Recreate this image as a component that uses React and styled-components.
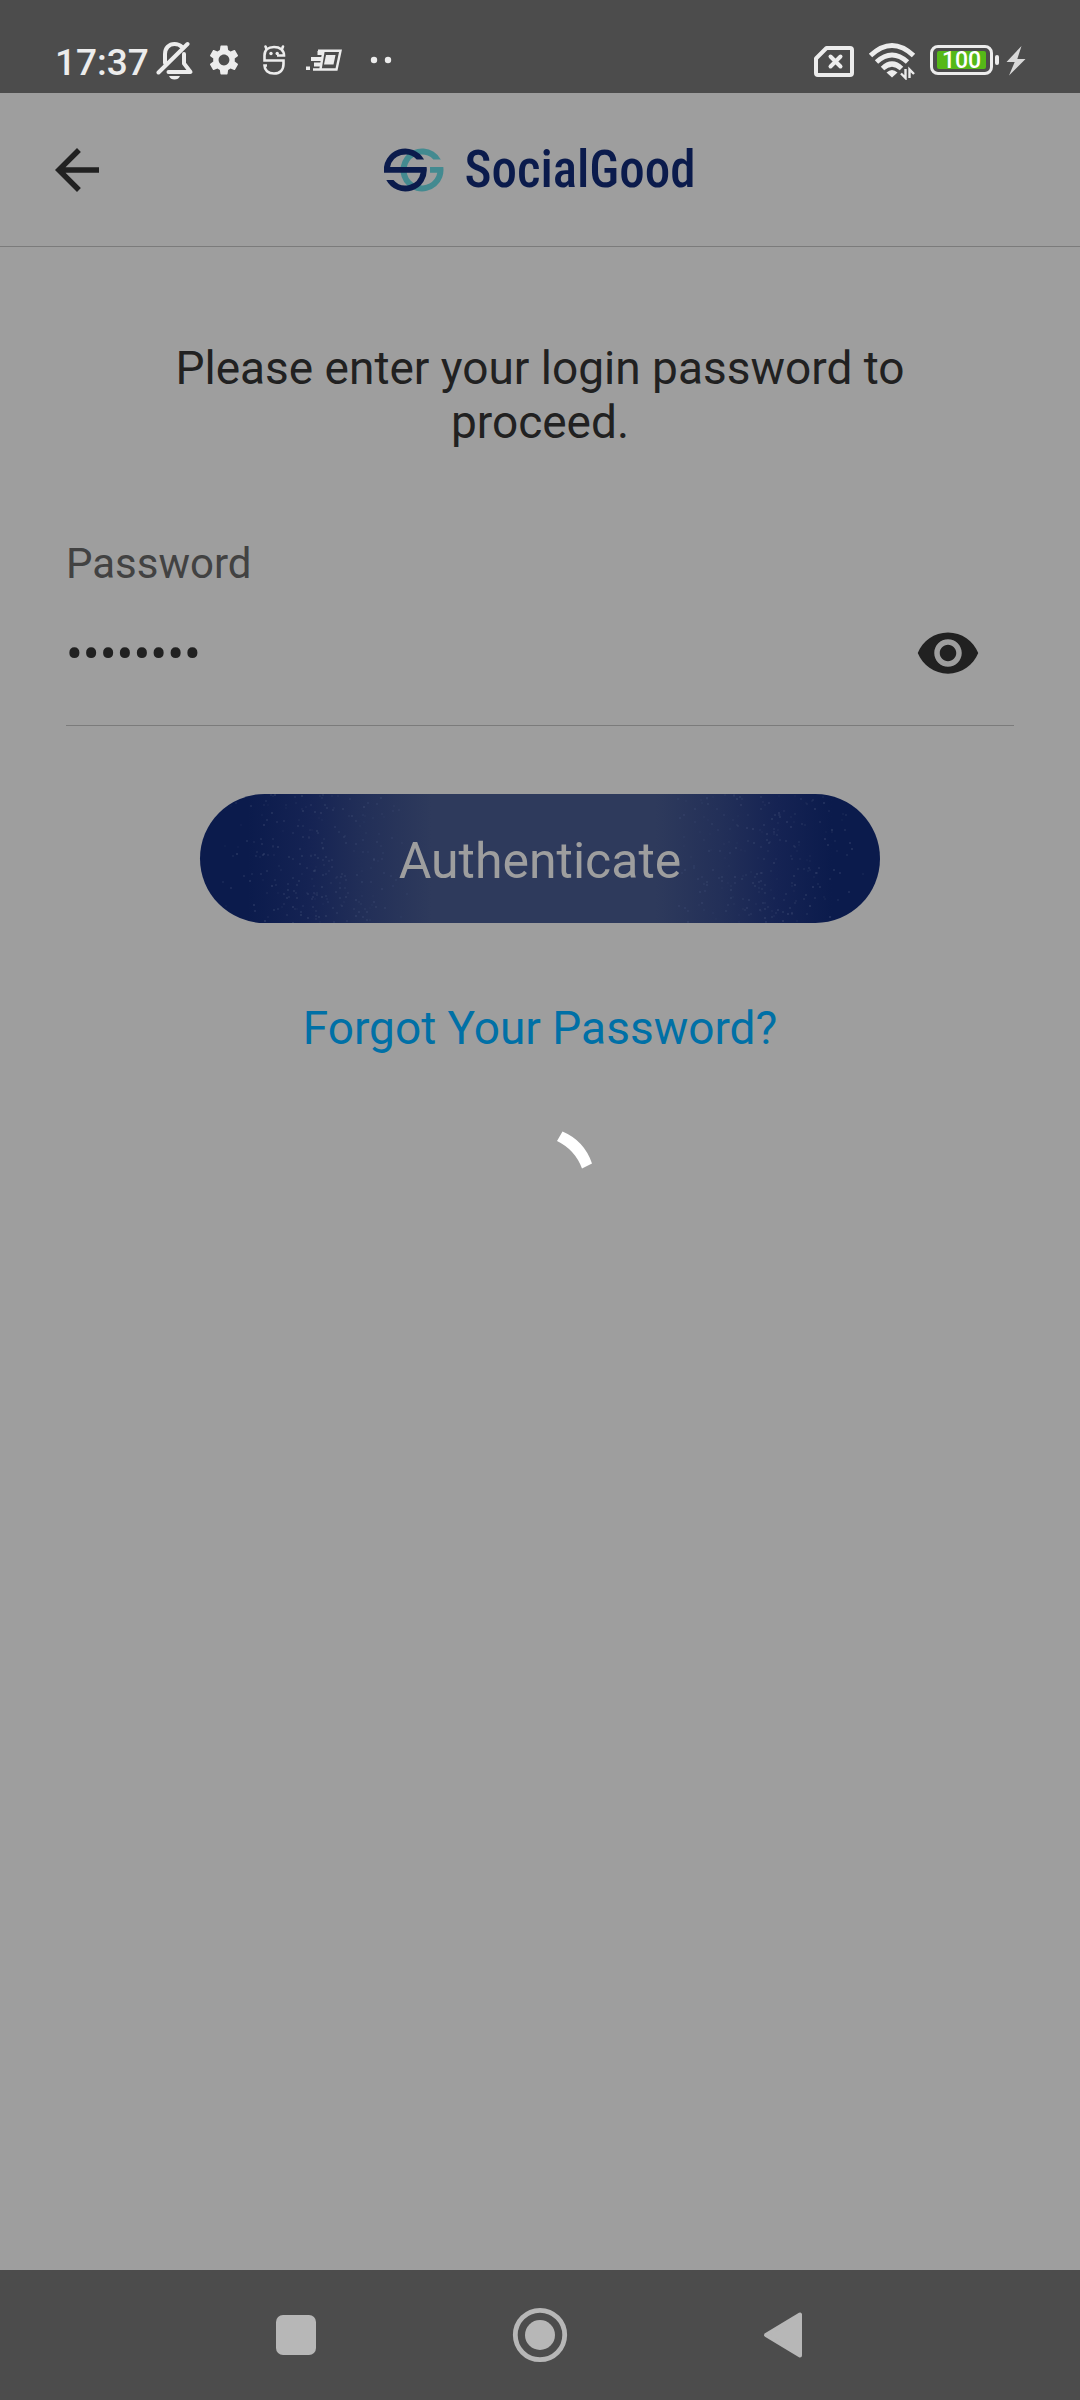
import React, { useState } from "react";
import styled, { createGlobalStyle } from "styled-components";
import { MdArrowBack, MdSettings, MdVisibility } from "react-icons/md";

const color = {
  page: "#9e9e9e",
  system: "#4c4c4c",
  systemIcon: "#ececec",
  navIcon: "#b7b7b7",
  line: "#7b7b7b",
  ink: "#212121",
  muted: "#424242",
  navy: "#0b1b4c",
  slate: "#2e3a5c",
  teal: "#438a90",
  link: "#0070a6",
  green: "#55b818",
};

const GlobalStyle = createGlobalStyle`
  * { box-sizing: border-box; }
  body {
    margin: 0;
    background: ${color.page};
    color: ${color.ink};
    font-family: Roboto, "Noto Sans", sans-serif;
  }
  svg { display: block; flex: none; }
`;

const Screen = styled.div`
  display: flex;
  flex-direction: column;
  min-height: 100vh;
`;

const StatusBar = styled.div`
  display: flex;
  align-items: center;
  height: 93px;
  padding: 32px 54px 0 55px;
  background: ${color.system};
  color: ${color.systemIcon};
`;

const Clock = styled.time`
  flex: none;
  width: 101px;
  font-size: 37px;
  font-weight: 500;
  line-height: 44px;
`;

const StatusGroup = styled.div`
  display: flex;
  align-items: center;
  gap: ${(p) => p.$gap}px;
  padding-bottom: 5px;
  margin-left: ${(p) => (p.$end ? "auto" : 0)};
`;

const PowerStatus = styled.div`
  display: flex;
  align-items: center;
  gap: 7px;
`;

const Battery = styled.div`
  display: flex;
  align-items: center;
  gap: 2px;

  &::after {
    content: "";
    width: 4px;
    height: 10px;
    border-radius: 2px;
    background: ${color.systemIcon};
  }
`;

const BatteryShell = styled.div`
  width: 63px;
  height: 30px;
  padding: 3px 4px;
  border: 3px solid ${color.systemIcon};
  border-radius: 8px;
`;

const BatteryFill = styled.div`
  display: flex;
  align-items: center;
  justify-content: center;
  height: 18px;
  padding-top: 2px;
  border-radius: 2px;
  background: ${color.green};
  color: #fff;
  font-size: 23px;
  font-weight: 500;
  line-height: 18px;
`;

const Header = styled.header`
  display: grid;
  grid-template-columns: 1fr auto 1fr;
  align-items: center;
  height: 154px;
  padding: 0 44px;
  border-bottom: 1px solid ${color.line};
`;

const IconButton = styled.button`
  display: flex;
  flex: none;
  width: 66px;
  height: 66px;
  padding: 0;
  border: 0;
  background: none;
  color: inherit;
  cursor: pointer;
`;

const Brand = styled.div`
  display: flex;
  align-items: center;
  gap: 20px;
  color: ${color.navy};
`;

const Wordmark = styled.span`
  font-family: "Roboto Condensed", "Liberation Sans Narrow", Roboto, sans-serif;
  font-size: 51px;
  font-weight: 500;
  line-height: 56px;
`;

const Main = styled.main`
  display: flex;
  flex: 1;
  flex-direction: column;
  align-items: center;
  padding: 94px 66px 0;
`;

const Prompt = styled.h1`
  max-width: 820px;
  margin: 0;
  font-size: 46px;
  font-weight: 400;
  line-height: 54px;
  text-align: center;
`;

const Form = styled.form`
  display: flex;
  flex-direction: column;
  align-items: center;
  width: 100%;
  margin-top: 90px;
`;

const Label = styled.label`
  align-self: stretch;
  color: ${color.muted};
  font-size: 42px;
  line-height: 50px;
`;

const Field = styled.div`
  display: flex;
  align-items: center;
  width: 100%;
  padding: 31px 33px 39px 0;
  border-bottom: 1px solid ${color.line};
`;

const PasswordInput = styled.input`
  flex: 1;
  min-width: 0;
  height: 66px;
  padding: 2px 0 0;
  border: 0;
  outline: 0;
  background: none;
  color: inherit;
  font-family: inherit;
  font-size: 50px;
`;

const SubmitButton = styled.button`
  position: relative;
  width: 100%;
  max-width: 680px;
  height: 129px;
  margin-top: 68px;
  padding: 4px 0 0;
  overflow: hidden;
  border: 0;
  border-radius: 65px;
  background: linear-gradient(
    90deg,
    ${color.navy} 7%,
    #152353 16%,
    #222f58 24%,
    ${color.slate} 34%,
    ${color.slate} 67%,
    #222f58 77%,
    #152353 85%,
    ${color.navy} 93%
  );
  color: ${color.page};
  font-family: inherit;
  font-size: 50px;
  line-height: 58px;
  cursor: pointer;
`;

const Grain = styled.svg`
  position: absolute;
  inset: 0;
  width: 100%;
  height: 100%;
`;

const ButtonText = styled.span`
  position: relative;
`;

const ForgotLink = styled.a`
  margin-top: 78px;
  color: ${color.link};
  font-size: 46px;
  line-height: 54px;
  text-decoration: none;
`;

const Spinner = styled.div`
  margin-top: 73px;
`;

const NavBar = styled.nav`
  display: flex;
  align-items: center;
  justify-content: center;
  gap: 178px;
  height: 130px;
  background: ${color.system};
  color: ${color.navIcon};
`;

const BellOffIcon = () => (
  <svg width="38" height="40" viewBox="0 0 38 40" fill="none" stroke="currentColor" strokeWidth="4" strokeLinecap="round" strokeLinejoin="round" aria-hidden="true">
    <path d="M2.5 32.5L31.500 4" />
    <path d="M9 23V14C9 8 13 4 18.500 4C21.500 4 24 5 26 7" />
    <path d="M28 14V23.500L34.500 32H12.500" />
    <path d="M13 36H24Q22.500 39.500 18.500 39.500T13 36Z" fill="currentColor" stroke="none" />
  </svg>
);

const RobotIcon = () => (
  <svg width="40" height="40" viewBox="0 0 40 40" fill="none" stroke="currentColor" strokeWidth="2.600" aria-hidden="true">
    <path d="M23 15.500H30C30 10 26 7 20 7S10.500 10 10.500 15.500V20.500H29.500V24C29.500 30 26 33.500 20 33.500S10.500 30 10.500 25.500H13" />
    <path d="M12.500 9L11.500 6.500M28 9L29 6.500" strokeLinecap="round" />
    <g fill="currentColor" stroke="none">
      <circle cx="17" cy="13.500" r="1.700" />
      <circle cx="23.200" cy="13.500" r="1.700" />
    </g>
  </svg>
);

const FastFrameIcon = () => (
  <svg width="36" height="40" viewBox="0 0 36 40" fill="none" stroke="currentColor" strokeWidth="2.400" aria-hidden="true">
    <path d="M12 10.700H34.500L30.500 29.500H7M17.500 11L14.500 29" />
    <path d="M20 15h9.500l-2 9.500H18z" fill="currentColor" stroke="none" />
    <path d="M11.500 13h5M5 19h11M8 24.500h7" strokeWidth="4" />
    <path d="M0 26.500h4v3.500H0z" fill="currentColor" stroke="none" />
  </svg>
);

const MoreDotsIcon = () => (
  <svg width="54" height="40" viewBox="0 0 54 40" fill="currentColor" aria-hidden="true">
    <circle cx="20" cy="20" r="3.200" />
    <circle cx="34" cy="20" r="3.200" />
  </svg>
);

const NoSimIcon = () => (
  <svg width="40" height="40" viewBox="0 0 40 40" fill="none" stroke="currentColor" strokeWidth="4" strokeLinejoin="round" strokeLinecap="round" aria-hidden="true">
    <path d="M12.500 8H36q2 0 2 2V33q0 2-2 2H4q-2 0-2-2V18.500z" />
    <path d="M16.500 16.500l10 10M26.500 16.500l-10 10" />
  </svg>
);

const WifiIcon = () => (
  <svg width="48" height="40" viewBox="0 0 48 40" fill="none" stroke="currentColor" strokeWidth="5" aria-hidden="true">
    <path d="M2.500 15.500Q24-4.500 45.500 15.500M8.500 22Q24 8 39.500 22M14.500 28.500Q24 19.500 33.500 28.500" />
    <path d="M18.500 32.500q5.500-5 11 0L24 37.500z" fill="currentColor" stroke="none" />
    <path d="M37.500 29v9l-4.500-4.500M41.500 38v-8.500l4.500 4.500" strokeWidth="2.400" />
  </svg>
);

const BoltIcon = () => (
  <svg width="20" height="40" viewBox="0 0 20 40" fill="#d8d8d8" aria-hidden="true">
    <path d="M15.500 6L.5 22h8.200L3 35.500 19.500 19h-8.200z" />
  </svg>
);

const BrandMark = () => (
  <svg width="60" height="44" viewBox="0 0 60 44" aria-hidden="true">
    <path fill={color.teal} d="M56.800 11.500A21.500 21.500 0 1 0 59.300 19H46V24.700H53.300A15.500 15.500 0 1 1 49.400 11.500Z" />
    <path fill={color.navy} d="M40.100 11.500A21.500 21.500 0 0 0 0 24.700H36.600A15.500 15.500 0 0 1 9.500 32H2.300A21.500 21.500 0 0 0 42.600 19H6.100A15.500 15.500 0 0 1 32.700 11.500Z" />
  </svg>
);

// Speckles are denser where the gradient turns from navy to slate.
const speckles = (() => {
  let seed = 7;
  const next = () => {
    seed = (seed * 16807) % 2147483647;
    return seed / 2147483647;
  };
  return Array.from({ length: 520 }, (_, i) => {
    const spread = (next() + next()) / 2;
    const left = 10 + spread * 210;
    return {
      x: Math.round(i % 2 ? left : 680 - left),
      y: Math.round(next() * 128),
      opacity: 0.1 + next() * 0.35,
    };
  });
})();

export default function App() {
  const [shown, setShown] = useState(false);
  const [password, setPassword] = useState("password");

  return (
    <>
      <GlobalStyle />
      <Screen>
        <StatusBar>
          <Clock>17:37</Clock>
          <StatusGroup $gap={12}>
            <BellOffIcon />
            <MdSettings size={36} aria-hidden="true" />
            <RobotIcon />
            <FastFrameIcon />
            <MoreDotsIcon />
          </StatusGroup>
          <StatusGroup $gap={14} $end>
            <NoSimIcon />
            <WifiIcon />
            <PowerStatus>
              <Battery>
                <BatteryShell>
                  <BatteryFill>100</BatteryFill>
                </BatteryShell>
              </Battery>
              <BoltIcon />
            </PowerStatus>
          </StatusGroup>
        </StatusBar>

        <Header>
          <IconButton type="button" aria-label="Back">
            <MdArrowBack size={66} />
          </IconButton>
          <Brand>
            <BrandMark />
            <Wordmark>SocialGood</Wordmark>
          </Brand>
        </Header>

        <Main>
          <Prompt>Please enter your login password to proceed.</Prompt>
          <Form onSubmit={(e) => e.preventDefault()}>
            <Label htmlFor="password">Password</Label>
            <Field>
              <PasswordInput
                id="password"
                type={shown ? "text" : "password"}
                value={password}
                onChange={(e) => setPassword(e.target.value)}
              />
              <IconButton type="button" aria-label="Show password" onClick={() => setShown(!shown)}>
                <MdVisibility size={66} />
              </IconButton>
            </Field>
            <SubmitButton type="submit">
              <Grain viewBox="0 0 680 129" preserveAspectRatio="none" aria-hidden="true">
                {speckles.map((s, i) => (
                  <rect key={i} x={s.x} y={s.y} width="2" height="2" fill="#3a4870" opacity={s.opacity} />
                ))}
              </Grain>
              <ButtonText>Authenticate</ButtonText>
            </SubmitButton>
          </Form>
          <ForgotLink href="#forgot">Forgot Your Password?</ForgotLink>
          <Spinner role="status" aria-label="Loading">
            <svg width="108" height="108" viewBox="0 0 108 108" aria-hidden="true">
              <path fill="#fff" d="M76.500 3.500A53 53 0 0 1 106 35.500L96 40.500A50 50 0 0 0 71 13Z" />
            </svg>
          </Spinner>
        </Main>

        <NavBar aria-label="System">
          <IconButton type="button" aria-label="Recent apps">
            <svg width="66" height="66" viewBox="0 0 66 66" fill="currentColor">
              <rect x="13" y="13" width="40" height="40" rx="7" />
            </svg>
          </IconButton>
          <IconButton type="button" aria-label="Home">
            <svg width="66" height="66" viewBox="0 0 66 66" fill="currentColor">
              <circle cx="33" cy="33" r="24.700" fill="none" stroke="currentColor" strokeWidth="4.800" />
              <circle cx="33" cy="33" r="15" />
            </svg>
          </IconButton>
          <IconButton type="button" aria-label="Go back">
            <svg width="66" height="66" viewBox="0 0 66 66" fill="currentColor" stroke="currentColor" strokeWidth="4" strokeLinejoin="round">
              <path d="M49 12.500V53.500L15 33z" />
            </svg>
          </IconButton>
        </NavBar>
      </Screen>
    </>
  );
}
